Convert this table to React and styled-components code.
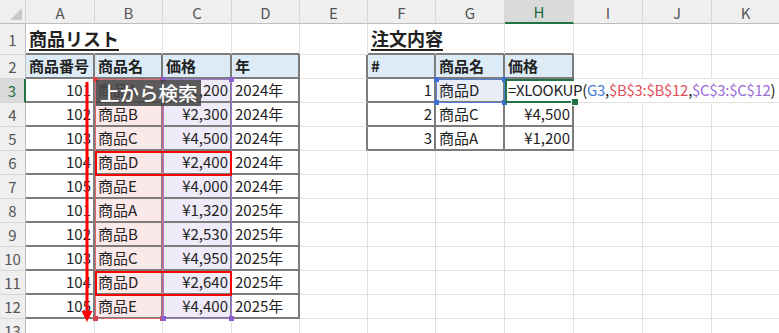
import React from 'react';
import styled, { createGlobalStyle } from 'styled-components';

const COLS = ['A', 'B', 'C', 'D', 'E', 'F', 'G', 'H', 'I', 'J', 'K'];
const COL_W = [69, 68, 69, 68, 68, 68, 69, 69, 69, 69, 68];
const ROW_COUNT = 13;

const GREEN = '#217346';
const GRID = '#e0e0e0';
const RULE = '#7c7c7c';

const GlobalStyle = createGlobalStyle`
  *, *::before, *::after { box-sizing: border-box; }
  html, body { margin: 0; padding: 0; background: #fff; overflow: hidden; }
  body { font-family: "Noto Sans CJK JP", "Noto Sans", sans-serif; }
`;

const Sheet = styled.div`
  display: grid;
  grid-template-columns: 26px ${COL_W.map((w) => `${w}px`).join(' ')};
  grid-template-rows: 24px 31px repeat(12, 24px);
  width: 780px;
  height: 333px;
  overflow: hidden;
  font-family: "Noto Sans CJK JP", "Noto Sans", sans-serif;
  font-size: 15px;
  color: #222;
`;

/* every sheet part sits on its own grid line pair */
const placed = (p) => `grid-column: ${p.$gc}; grid-row: ${p.$gr};`;

const Corner = styled.div`
  ${placed}
  display: flex;
  justify-content: flex-end;
  align-items: flex-end;
  padding: 0 3px 3px 0;
  background: #efefef;
  border-right: 1px solid #d4d4d4;
  border-bottom: 1px solid #bdbdbd;
  &::after {
    content: '';
    width: 0;
    height: 0;
    border-left: 12px solid transparent;
    border-bottom: 12px solid #c9c9c9;
  }
`;

const ColHead = styled.div`
  ${placed}
  display: flex;
  align-items: center;
  justify-content: center;
  background: ${(p) => (p.$active ? '#dadada' : '#efefef')};
  color: ${(p) => (p.$active ? '#1d6a3f' : '#555')};
  border-right: 1px solid #d6d6d6;
  border-bottom: ${(p) => (p.$active ? `2px solid ${GREEN}` : '1px solid #bdbdbd')};
  font-size: 15px;
  line-height: 1;
  padding-top: 1px;
`;

const RowHead = styled.div`
  ${placed}
  display: flex;
  align-items: center;
  justify-content: center;
  background: ${(p) => (p.$active ? '#dadada' : '#efefef')};
  color: ${(p) => (p.$active ? '#1d6a3f' : '#555')};
  border-right: ${(p) => (p.$active ? `2px solid ${GREEN}` : '1px solid #bdbdbd')};
  border-bottom: 1px solid #d6d6d6;
  font-size: 15px;
  line-height: 1;
`;

const TINTS = {
  band: '#ddebf7',
  rose: '#fbe9ea',
  lilac: '#efebf8',
  sky: '#e8edf8',
};

const edge = (kind) => {
  if (kind === 'dark') return `2px solid ${RULE}`;
  if (kind === 'none') return '1px solid transparent';
  return `1px solid ${GRID}`;
};

const Cell = styled.div`
  ${placed}
  display: flex;
  align-items: center;
  justify-content: ${(p) => (p.$align === 'right' ? 'flex-end' : 'flex-start')};
  padding: 0 2px 0 3px;
  min-width: 0;
  white-space: nowrap;
  overflow: ${(p) => (p.$spill ? 'visible' : 'hidden')};
  position: relative;
  z-index: ${(p) => (p.$spill ? 1 : 'auto')};
  background: ${(p) => TINTS[p.$tint] || 'transparent'};
  border-right: ${(p) => edge(p.$r)};
  border-bottom: ${(p) => edge(p.$b)};
  font-weight: ${(p) => (p.$bold ? 700 : 400)};
  font-size: ${(p) => (p.$title ? '18px' : '15px')};
  line-height: 1.2;
  text-decoration: ${(p) => (p.$title ? 'underline' : 'none')};
  text-decoration-thickness: 1.5px;
  text-underline-offset: 3px;
`;

const FormulaText = styled.span`
  letter-spacing: -0.3px;
`;

const Ref = styled.span`
  color: ${(p) => p.$color};
`;

/* formula reference outlines */
const RangeFrame = styled.div`
  ${placed}
  position: relative;
  z-index: 2;
  border: ${(p) => p.$w || '1px'} solid ${(p) => p.$color};
  pointer-events: none;
`;

const Handle = styled.span`
  position: absolute;
  width: 5px;
  height: 5px;
  background: ${(p) => p.$color};
  ${(p) => (p.$top ? 'top: -3px;' : 'bottom: -3px;')}
  ${(p) => (p.$left ? 'left: -3px;' : 'right: -3px;')}
`;

const ActiveFrame = styled.div`
  grid-column: 9;
  grid-row: 4;
  position: relative;
  z-index: 3;
  border: 2px solid ${GREEN};
  border-right: none;
  pointer-events: none;
`;

const FillHandle = styled.span`
  position: absolute;
  right: -4px;
  bottom: -4px;
  width: 6px;
  height: 6px;
  background: ${GREEN};
  outline: 1px solid #fff;
`;

const FindBox = styled.div`
  grid-column: 3 / 5;
  grid-row: ${(p) => p.$gr};
  position: relative;
  z-index: 3;
  margin-bottom: -1px;
  border: 2px solid #ff0000;
`;

const ArrowLane = styled.svg`
  grid-column: 2;
  grid-row: 4 / 14;
  position: relative;
  z-index: 4;
  width: 69px;
  height: 240px;
  overflow: visible;
`;

const SearchLabel = styled.div`
  grid-column: 3 / 6;
  grid-row: 4;
  position: relative;
  z-index: 5;
  align-self: start;
  justify-self: start;
  display: flex;
  align-items: center;
  width: 105px;
  height: 26px;
  margin: 1px 0 0 1px;
  padding-left: 4px;
  background: rgba(70, 70, 70, 0.88);
  color: #fff;
  font-size: 19.5px;
  font-weight: 500;
  line-height: 1;
  white-space: nowrap;
`;

const products = [
  [101, '商品A', '¥1,200', '2024年'],
  [102, '商品B', '¥2,300', '2024年'],
  [103, '商品C', '¥4,500', '2024年'],
  [104, '商品D', '¥2,400', '2024年'],
  [105, '商品E', '¥4,000', '2024年'],
  [101, '商品A', '¥1,320', '2025年'],
  [102, '商品B', '¥2,530', '2025年'],
  [103, '商品C', '¥4,950', '2025年'],
  [104, '商品D', '¥2,640', '2025年'],
  [105, '商品E', '¥4,400', '2025年'],
];

const orders = [
  [1, '商品D', null],
  [2, '商品C', '¥4,500'],
  [3, '商品A', '¥1,200'],
];

const Formula = () => (
  <FormulaText>
    =XLOOKUP(
    <Ref $color="#4a7bd6">G3</Ref>,
    <Ref $color="#e0505a">$B$3:$B$12</Ref>,
    <Ref $color="#9a6cd6">$C$3:$C$12</Ref>)
  </FormulaText>
);

const inListTable = (c, r) => c >= 0 && c <= 3 && r >= 2 && r <= 12;
const inOrderTable = (c, r) => c >= 5 && c <= 7 && r >= 2 && r <= 5;
const inTable = (c, r) => inListTable(c, r) || inOrderTable(c, r);

function cellContent(c, r) {
  if (r === 1 && c === 0) return { text: '商品リスト', title: true, bold: true, spill: true };
  if (r === 1 && c === 5) return { text: '注文内容', title: true, bold: true, spill: true };
  if (r === 2) {
    const heads = { 0: '商品番号', 1: '商品名', 2: '価格', 3: '年', 5: '#', 6: '商品名', 7: '価格' };
    if (heads[c]) return { text: heads[c], bold: true, tint: 'band' };
  }
  if (r >= 3 && r <= 12 && c <= 3) {
    const row = products[r - 3];
    if (c === 0) return { text: row[0], align: 'right' };
    if (c === 1) return { text: row[1], tint: 'rose' };
    if (c === 2) return { text: row[2], align: 'right', tint: 'lilac' };
    return { text: row[3] };
  }
  if (r >= 3 && r <= 5 && c >= 5 && c <= 7) {
    const row = orders[r - 3];
    if (c === 5) return { text: row[0], align: 'right' };
    if (c === 6) return { text: row[1], tint: r === 3 ? 'sky' : undefined };
    if (r === 3) return { text: <Formula />, spill: true };
    return { text: row[2], align: 'right' };
  }
  return { text: '' };
}

// gridlines hidden where text runs into the next cell
const hiddenRight = (c, r) =>
  (r === 1 && (c === 0 || c === 5)) || (r === 3 && c >= 7 && c <= 9);

export default function App() {
  const cells = [];
  cells.push(<Corner key="corner" $gc={1} $gr={1} />);
  COLS.forEach((name, c) => {
    cells.push(
      <ColHead key={`h-${name}`} $gc={c + 2} $gr={1} $active={c === 7}>
        {name}
      </ColHead>
    );
  });

  for (let r = 1; r <= ROW_COUNT; r += 1) {
    cells.push(
      <RowHead key={`r-${r}`} $gc={1} $gr={r + 1} $active={r === 3}>
        {r}
      </RowHead>
    );
    COLS.forEach((name, c) => {
      const info = cellContent(c, r);
      let right = inTable(c, r) || inTable(c + 1, r) ? 'dark' : 'light';
      if (hiddenRight(c, r)) right = 'none';
      const bottom = inTable(c, r) || inTable(c, r + 1) ? 'dark' : 'light';
      cells.push(
        <Cell
          key={`${name}${r}`}
          $gc={c + 2}
          $gr={r + 1}
          $align={info.align}
          $bold={info.bold}
          $title={info.title}
          $tint={info.tint}
          $spill={info.spill}
          $r={right}
          $b={bottom}
        >
          {info.text}
        </Cell>
      );
    });
  }

  const corners = [
    { $top: true, $left: true },
    { $top: true },
    { $left: true },
    {},
  ];

  return (
    <>
      <GlobalStyle />
      <Sheet>
        {cells}

        <RangeFrame $gc="3" $gr="4 / 14" $color="#e06a6e">
          {corners.map((k, i) => (
            <Handle key={i} $color="#d9444c" {...k} />
          ))}
        </RangeFrame>
        <RangeFrame $gc="4" $gr="4 / 14" $color="#9b7ad8">
          {corners.map((k, i) => (
            <Handle key={i} $color="#8a5fd0" {...k} />
          ))}
        </RangeFrame>
        <RangeFrame $gc="8" $gr="4" $color="#4f7fd6" $w="1.5px">
          {corners.map((k, i) => (
            <Handle key={i} $color="#3f6fd0" {...k} />
          ))}
        </RangeFrame>
        <ActiveFrame>
          <FillHandle />
        </ActiveFrame>

        <FindBox $gr="7" />
        <FindBox $gr="12" />

        <ArrowLane viewBox="0 0 69 240">
          <rect x="59.5" y="3" width="3" height="231" fill="#ff0000" />
          <polygon points="55.5,232 66.5,232 61,243" fill="#ff0000" />
        </ArrowLane>

        <SearchLabel>上から検索</SearchLabel>
      </Sheet>
    </>
  );
}
